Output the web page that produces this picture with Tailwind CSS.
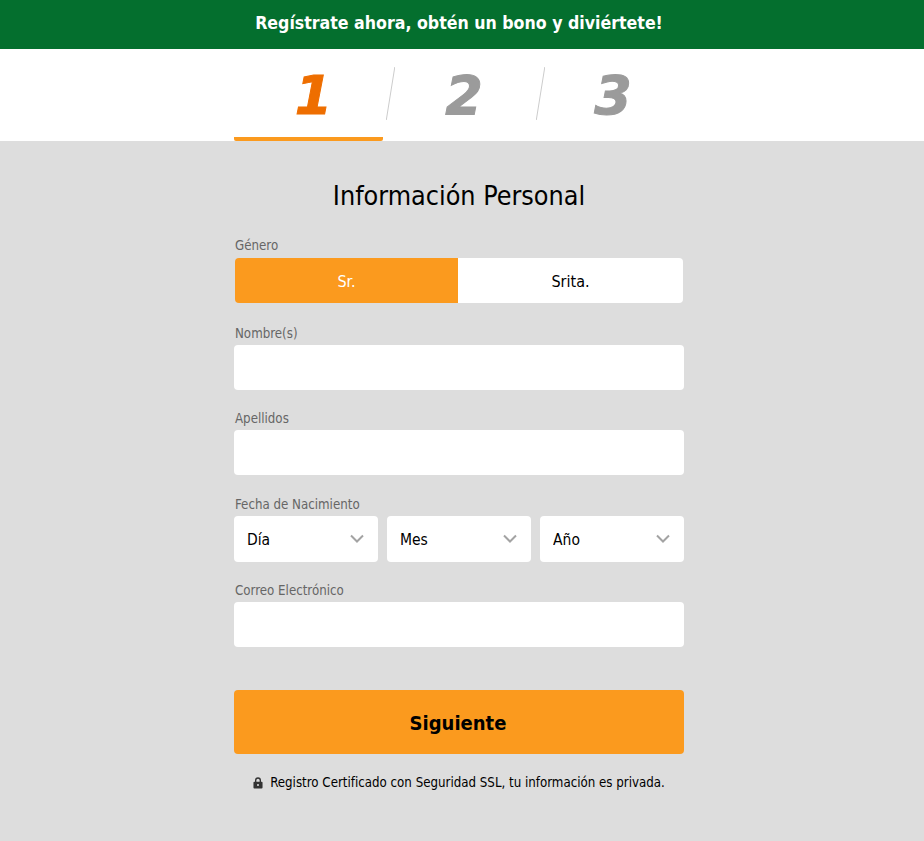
<!DOCTYPE html>
<html lang="es">
<head>
  <meta charset="UTF-8" />
  <title>Registro</title>
  <meta name="viewport" content="width=device-width, initial-scale=1.0" />
  <script src="https://cdn.jsdelivr.net/npm/@tailwindcss/browser@4"></script>
</head>
<body class="bg-[#dddddd] font-['DejaVu_Sans_Condensed','DejaVu_Sans',sans-serif] h-[841px] overflow-hidden">
  <!-- Banner -->
  <div class="h-[49px] pr-[6px] pb-[3px] bg-[#046f2e] flex items-center justify-center text-white font-bold text-[17.6px]">Regístrate ahora, obtén un bono y diviértete!</div>

  <!-- Steps -->
  <div class="h-[92px] pr-[6px] bg-white">
    <div class="w-[450px] mx-auto h-full flex font-['DejaVu_Sans',sans-serif]">
      <div class="w-[149px] h-full border-b-4 border-[#fb9a1e] rounded-b-[2px] flex items-center justify-center pt-[5px] pl-[10px] text-[54px] font-bold italic text-[#ee6e00] leading-none [-webkit-text-stroke:1px_#ee6e00]">1</div>
      <div class="w-[10px] flex pt-[18px] ml-[3px]">
        <svg width="9" height="53" viewBox="0 0 9 53"><path d="M8.8 0 L0.3 53" stroke="#cccccc" stroke-width="1" fill="none" /></svg>
      </div>
      <div class="w-[140px] h-full flex items-center justify-center pt-[1px] pr-[4px] text-[54px] font-bold italic text-[#9b9b9b] leading-none [-webkit-text-stroke:1px_#9b9b9b]">2</div>
      <div class="w-[10px] flex pt-[18px]">
        <svg width="9" height="53" viewBox="0 0 9 53"><path d="M8.8 0 L0.3 53" stroke="#cccccc" stroke-width="1" fill="none" /></svg>
      </div>
      <div class="w-[138px] h-full flex items-center justify-center pt-[1px] pr-[4px] text-[54px] font-bold italic text-[#9b9b9b] leading-none [-webkit-text-stroke:1px_#9b9b9b]">3</div>
    </div>
  </div>

  <!-- Form -->
  <div class="pr-[6px]">
  <div class="w-[450px] mx-auto">
    <h1 class="mt-[37px] h-[36px] leading-[36px] text-center text-[26.7px] text-black">Información Personal</h1>

    <label class="block mt-[22px] ml-[1px] h-[20px] leading-[20px] text-[13.2px] text-[#666666]">Género</label>
    <div class="mt-[2px] mx-[1px] h-[45px] flex text-[16px] rounded-[4px] overflow-hidden">
      <div class="w-[223px] pt-[2px] bg-[#fb9a1e] text-white flex items-center justify-center">Sr.</div>
      <div class="flex-1 pt-[2px] bg-white text-black flex items-center justify-center">Srita.</div>
    </div>

    <label class="block mt-[21px] ml-[1px] h-[20px] leading-[20px] text-[13.2px] text-[#666666]">Nombre(s)</label>
    <input type="text" class="block mt-[1px] w-full h-[45px] bg-white rounded-[4px]" />

    <label class="block mt-[19px] ml-[1px] h-[20px] leading-[20px] text-[13.2px] text-[#666666]">Apellidos</label>
    <input type="text" class="block mt-[1px] w-full h-[45px] bg-white rounded-[4px]" />

    <label class="block mt-[20px] ml-[1px] h-[20px] leading-[20px] text-[13.2px] text-[#666666]">Fecha de Nacimiento</label>
    <div class="mt-[1px] grid grid-cols-3 gap-[9px]">
      <div class="relative">
        <select class="block w-full h-[46px] pl-[13px] pt-[3px] bg-white rounded-[4px] text-[15.5px] text-black appearance-none"><option>Día</option></select>
        <svg class="absolute right-[14px] top-[18px]" width="14" height="9" viewBox="0 0 14 9"><path d="M1 1.5 L7 7.5 L13 1.5" stroke="#a3a3a3" stroke-width="2" fill="none" /></svg>
      </div>
      <div class="relative">
        <select class="block w-full h-[46px] pl-[13px] pt-[3px] bg-white rounded-[4px] text-[15.5px] text-black appearance-none"><option>Mes</option></select>
        <svg class="absolute right-[14px] top-[18px]" width="14" height="9" viewBox="0 0 14 9"><path d="M1 1.5 L7 7.5 L13 1.5" stroke="#a3a3a3" stroke-width="2" fill="none" /></svg>
      </div>
      <div class="relative">
        <select class="block w-full h-[46px] pl-[13px] pt-[3px] bg-white rounded-[4px] text-[15.5px] text-black appearance-none"><option>Año</option></select>
        <svg class="absolute right-[14px] top-[18px]" width="14" height="9" viewBox="0 0 14 9"><path d="M1 1.5 L7 7.5 L13 1.5" stroke="#a3a3a3" stroke-width="2" fill="none" /></svg>
      </div>
    </div>

    <label class="block mt-[19px] ml-[1px] h-[20px] leading-[20px] text-[13.2px] text-[#666666]">Correo Electrónico</label>
    <input type="email" class="block mt-[1px] w-full h-[45px] bg-white rounded-[4px]" />

    <button class="block mt-[43px] w-full h-[64px] pt-[2px] pr-[2px] bg-[#fb9a1e] rounded-[4px] text-[20px] font-bold text-black">Siguiente</button>

    <div class="mt-[19px] h-[20px] flex items-center justify-center gap-[7px] text-[13.2px] text-black">
      <svg width="10" height="12" viewBox="0 0 11 13"><path fill="#333333" d="M2.2 5V3.5a3.3 3.3 0 0 1 6.6 0V5h.7c.6 0 1 .4 1 1v5.5c0 .6-.4 1-1 1h-8c-.6 0-1-.4-1-1V6c0-.6.4-1 1-1zm1.5 0h3.6V3.5a1.8 1.8 0 0 0-3.6 0zm1.8 2.6a1.1 1.1 0 1 0 0 2.2 1.1 1.1 0 0 0 0-2.2z" /></svg>
      <span>Registro Certificado con Seguridad SSL, tu información es privada.</span>
    </div>
  </div>
  </div>
</body>
</html>
